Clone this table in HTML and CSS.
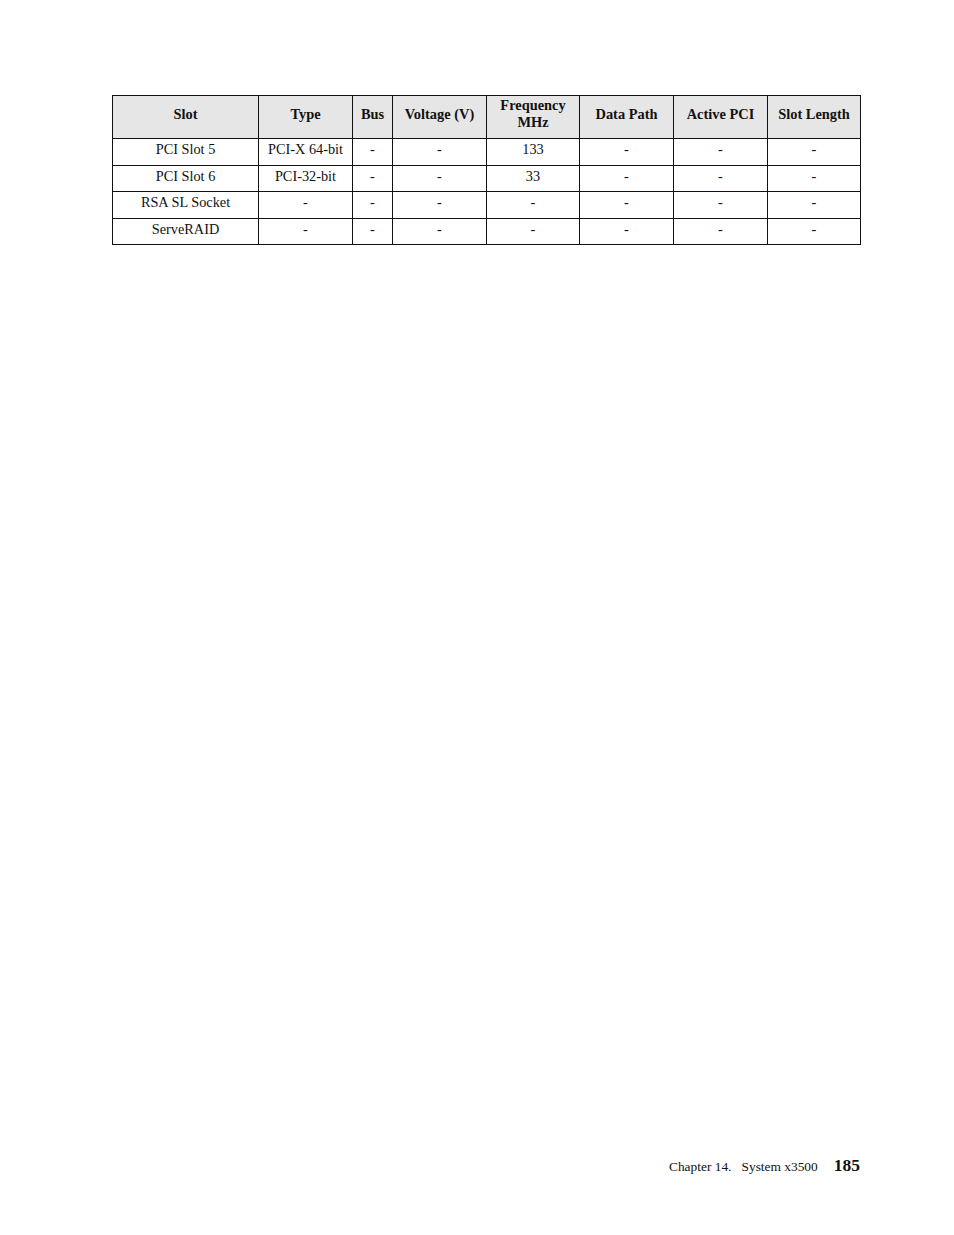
FILE: index.html
```html
<!DOCTYPE html>
<html>
<head>
<meta charset="utf-8">
<link rel="stylesheet" href="styles.css">
</head>
<body>
<div class="page">
  <table class="slots">
    <colgroup>
      <col class="c1"><col class="c2"><col class="c3"><col class="c4"><col class="c5"><col class="c6"><col class="c7"><col class="c8">
    </colgroup>
    <thead>
      <tr>
        <th>Slot</th><th>Type</th><th>Bus</th><th>Voltage (V)</th><th>Frequency<br>MHz</th><th>Data Path</th><th>Active PCI</th><th>Slot Length</th>
      </tr>
    </thead>
    <tbody>
      <tr><td>PCI Slot 5</td><td>PCI-X 64-bit</td><td>-</td><td>-</td><td>133</td><td>-</td><td>-</td><td>-</td></tr>
      <tr><td>PCI Slot 6</td><td>PCI-32-bit</td><td>-</td><td>-</td><td>33</td><td>-</td><td>-</td><td>-</td></tr>
      <tr><td>RSA SL Socket</td><td>-</td><td>-</td><td>-</td><td>-</td><td>-</td><td>-</td><td>-</td></tr>
      <tr><td>ServeRAID</td><td>-</td><td>-</td><td>-</td><td>-</td><td>-</td><td>-</td><td>-</td></tr>
    </tbody>
  </table>
  <div class="footer">
    <span class="chapter">Chapter 14.&nbsp;&nbsp; System x3500</span>
    <span class="pagenum">185</span>
  </div>
</div>
</body>
</html>
```
FILE: styles.css
```css
html, body {
  margin: 0;
  padding: 0;
  background: #fff;
}
.page {
  width: 954px;
  height: 1235px;
  box-sizing: border-box;
  padding: 95px 94px 0 112px;
  display: flex;
  flex-direction: column;
  font-family: "Liberation Serif", serif;
  color: #111;
}
.slots {
  border-collapse: collapse;
  table-layout: fixed;
  width: 749px;
}
.c1 { width: 146px; }
.c2 { width: 94px; }
.c3 { width: 40px; }
.c4 { width: 94px; }
.c5 { width: 93px; }
.c6 { width: 94px; }
.c7 { width: 94px; }
.c8 { width: 93px; }
.slots th, .slots td {
  border: 1px solid #111;
  text-align: center;
  padding: 0;
  font-weight: normal;
}
.slots th {
  background: #e6e6e6;
  font-family: "Liberation Serif", serif;
  font-weight: bold;
  height: 43px;
  box-sizing: border-box;
  padding-bottom: 6px;
  line-height: 17px;
  font-size: 14.4px;
}
.slots td {
  height: 26.5px;
  vertical-align: top;
  padding-top: 2px;
  line-height: 17px;
  box-sizing: border-box;
  font-family: "Liberation Serif", serif;
  font-size: 14.3px;
}
.footer {
  margin-top: auto;
  margin-bottom: 59px;
  display: flex;
  justify-content: flex-end;
  align-items: baseline;
  gap: 16px;
}
.chapter {
  font-family: "Liberation Serif", serif;
  font-size: 13.4px;
}
.pagenum {
  font-family: "Liberation Serif", serif;
  font-weight: bold;
  font-size: 17.5px;
}
```
